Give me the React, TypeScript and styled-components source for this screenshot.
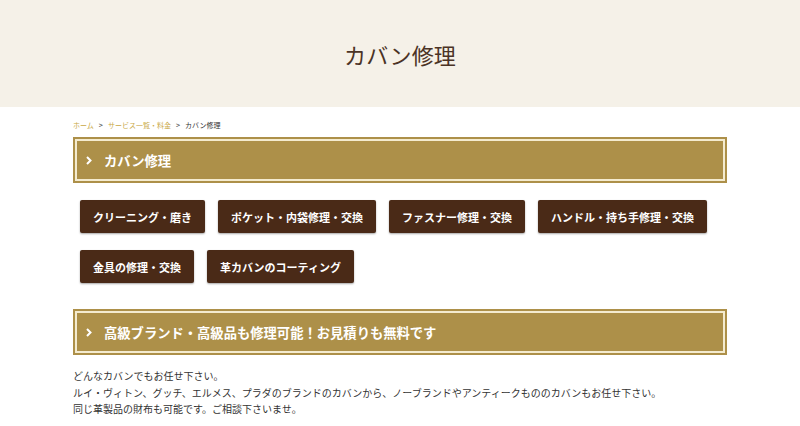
import React from "react";
import styled, { createGlobalStyle } from "styled-components";

const GlobalStyle = createGlobalStyle`
  body {
    margin: 0;
    background: #fff;
    font-family: "Noto Sans CJK JP", "Noto Sans", sans-serif;
    color: #333;
  }
`;

const services = [
  "クリーニング・磨き",
  "ポケット・内袋修理・交換",
  "ファスナー修理・交換",
  "ハンドル・持ち手修理・交換",
  "金具の修理・交換",
  "革カバンのコーティング",
];

function Chevron() {
  return (
    <svg width="8" height="9" viewBox="0 0 8 9">
      <path d="M2 1 L5.5 4.5 L2 8" fill="none" stroke="#fff" strokeWidth="2" />
    </svg>
  );
}

export default function App() {
  return (
    <>
      <GlobalStyle />
      <PageHeader>
        <PageTitle>カバン修理</PageTitle>
      </PageHeader>
      <Main>
        <Breadcrumb>
          <Crumb>ホーム</Crumb>
          <Sep>&gt;</Sep>
          <Crumb>サービス一覧・料金</Crumb>
          <Sep>&gt;</Sep>
          <Current>カバン修理</Current>
        </Breadcrumb>

        <SectionHeading>
          <Chevron />
          <span>カバン修理</span>
        </SectionHeading>

        <ButtonList>
          {services.map((s) => (
            <ServiceButton key={s}>{s}</ServiceButton>
          ))}
        </ButtonList>

        <SectionHeading>
          <Chevron />
          <span>高級ブランド・高級品も修理可能！お見積りも無料です</span>
        </SectionHeading>

        <Text>
          どんなカバンでもお任せ下さい。
          <br />
          ルイ・ヴィトン、グッチ、エルメス、プラダのブランドのカバンから、ノーブランドやアンティークもののカバンもお任せ下さい。
          <br />
          同じ革製品の財布も可能です。ご相談下さいませ。
        </Text>
      </Main>
    </>
  );
}

const PageHeader = styled.header`
  height: 107px;
  background: #f5f1e8;
  display: flex;
  align-items: center;
  justify-content: center;
`;

const PageTitle = styled.h1`
  margin: 0;
  font-size: 22px;
  font-weight: 400;
  color: #4b3325;
  letter-spacing: 0.2px;
`;

const Main = styled.main`
  width: 654px;
  margin: 0 auto;
  display: flex;
  flex-direction: column;
`;

const Breadcrumb = styled.nav`
  display: flex;
  align-items: center;
  gap: 5px;
  height: 14px;
  margin-top: 11px;
  font-size: 7px;
`;

const Crumb = styled.span`
  color: #c9a845;
`;

const Sep = styled.span`
  color: #555;
  font-size: 7px;
  font-weight: 700;
`;

const Current = styled.span`
  color: #333;
`;

const SectionHeading = styled.h2`
  margin: 5px 0 0;
  height: 46px;
  box-sizing: border-box;
  background: #ad9049;
  border: 2px solid #ad9049;
  box-shadow: inset 0 0 0 2px #f4ebcf;
  display: flex;
  align-items: center;
  gap: 11px;
  padding-left: 10px;
  color: #fff;
  font-size: 13.3px;
  font-weight: 700;
`;

const ButtonList = styled.div`
  display: flex;
  flex-wrap: wrap;
  gap: 17px 13px;
  padding: 17px 0 0 7px;
  margin-bottom: 21px;
`;

const ServiceButton = styled.a`
  display: flex;
  align-items: center;
  height: 33px;
  padding: 0 13px;
  background: #4a2a17;
  color: #fff;
  font-size: 11px;
  font-weight: 700;
  border-radius: 2px;
  box-shadow: 0 1px 2px rgba(0, 0, 0, 0.35);
  cursor: pointer;
`;

const Text = styled.p`
  margin: 13px 0 0;
  font-size: 10px;
  line-height: 16.5px;
  color: #333;
`;
